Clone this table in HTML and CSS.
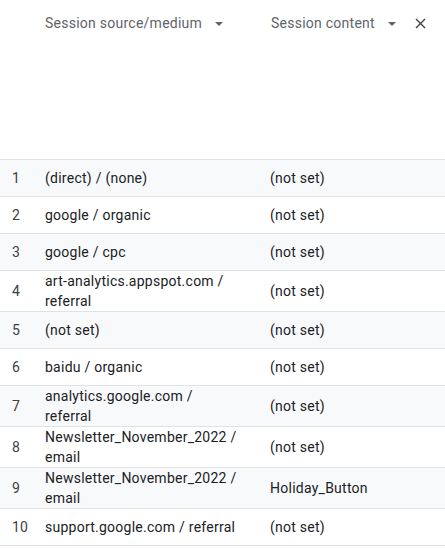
FILE: index.html
```html
<!DOCTYPE html>
<html>
<head>
<meta charset="utf-8">
<link rel="stylesheet" href="styles.css">
</head>
<body>
<div class="page">
  <div class="header">
    <div class="hcell hsrc">
      <span class="htext">Session source/medium</span>
      <svg class="caret" width="8" height="4" viewBox="0 0 8 4"><path d="M0 0h8L4 4z" fill="#5f6368"/></svg>
    </div>
    <div class="hcell hcontent">
      <span class="htext">Session content</span>
      <svg class="caret" width="8" height="4" viewBox="0 0 8 4"><path d="M0 0h8L4 4z" fill="#5f6368"/></svg>
      <svg class="close" width="11" height="11" viewBox="0 0 11 11"><path d="M1 1L10 10M10 1L1 10" stroke="#3c4043" stroke-width="1.4" fill="none"/></svg>
    </div>
  </div>
  <div class="table">
    <div class="row odd"><div class="idx">1</div><div class="c1">(direct) / (none)</div><div class="c2">(not set)</div></div>
    <div class="row"><div class="idx">2</div><div class="c1">google / organic</div><div class="c2">(not set)</div></div>
    <div class="row odd"><div class="idx">3</div><div class="c1">google / cpc</div><div class="c2">(not set)</div></div>
    <div class="row"><div class="idx">4</div><div class="c1">art-analytics.appspot.com /<br>referral</div><div class="c2">(not set)</div></div>
    <div class="row odd"><div class="idx">5</div><div class="c1">(not set)</div><div class="c2">(not set)</div></div>
    <div class="row"><div class="idx">6</div><div class="c1">baidu / organic</div><div class="c2">(not set)</div></div>
    <div class="row odd"><div class="idx">7</div><div class="c1">analytics.google.com /<br>referral</div><div class="c2">(not set)</div></div>
    <div class="row"><div class="idx">8</div><div class="c1">Newsletter_November_2022 /<br>email</div><div class="c2">(not set)</div></div>
    <div class="row odd"><div class="idx">9</div><div class="c1">Newsletter_November_2022 /<br>email</div><div class="c2">Holiday_Button</div></div>
    <div class="row"><div class="idx">10</div><div class="c1">support.google.com / referral</div><div class="c2">(not set)</div></div>
  </div>
</div>
</body>
</html>
```
FILE: styles.css
```css
html, body {
  margin: 0;
  padding: 0;
  background: #ffffff;
}
body {
  font-family: Roboto, "Liberation Sans", Arial, sans-serif;
  color: #202124;
}
.page {
  width: 445px;
}
.header {
  height: 159px;
  display: flex;
  align-items: flex-start;
  box-sizing: border-box;
  padding-top: 13px;
}
.hcell {
  display: flex;
  align-items: center;
  height: 20px;
  color: #5f6368;
  font-size: 14px;
  letter-spacing: 0.25px;
  white-space: nowrap;
  flex-shrink: 0;
}
.hsrc {
  width: 271px;
  padding-left: 45px;
  box-sizing: border-box;
}
.hcontent {
  flex: 1;
}
.caret {
  margin-left: 13px;
  margin-top: 1px;
  flex-shrink: 0;
}
.close {
  margin-left: 19px;
  flex-shrink: 0;
}
.table {
  border-top: 1px solid #e0e2e5;
}
.row {
  display: grid;
  grid-template-columns: 45px 225px 1fr;
  align-items: center;
  min-height: 36px;
  border-bottom: 1px solid #e0e2e5;
  font-size: 14px;
  line-height: 20px;
  letter-spacing: 0.25px;
}
.row.odd {
  background: #f8f9fa;
}
.idx {
  padding-left: 12px;
  color: #3c4043;
}
.c1, .c2 {
  color: #202124;
}
```
